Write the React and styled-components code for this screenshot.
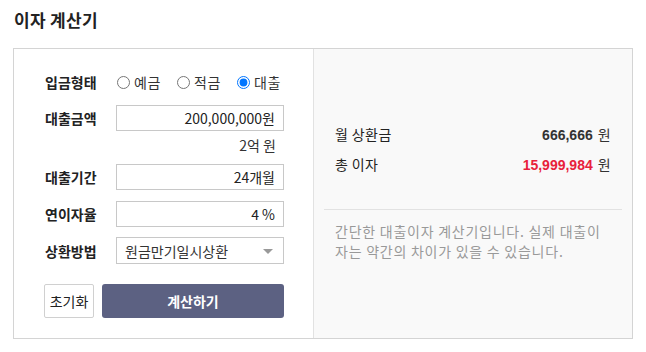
import React, { useState } from "react";
import styled, { createGlobalStyle } from "styled-components";

const GlobalStyle = createGlobalStyle`
  body {
    margin: 0;
    background: #fff;
    font-family: "Noto Sans CJK KR", "Noto Sans", sans-serif;
    color: #222;
  }
`;

const Page = styled.div`
  padding: 8px 13px 0;
`;

const Title = styled.h2`
  margin: 0 0 16px 1px;
  font-size: 17px;
  line-height: 24px;
  font-weight: 700;
  letter-spacing: 0.3px;
  color: #222;
`;

const Box = styled.div`
  display: flex;
  width: 620px;
  height: 291px;
  box-sizing: border-box;
  border: 1px solid #d4d4d4;
`;

const Form = styled.div`
  width: 300px;
  box-sizing: border-box;
  padding: 20px 29px 0 31px;
  border-right: 1px solid #e2e2e2;
`;

const Row = styled.div`
  display: flex;
  align-items: center;
  height: ${(p) => p.$h || 26}px;
  margin-top: ${(p) => p.$mt || 0}px;
`;

const Label = styled.label`
  width: 71px;
  flex: none;
  font-size: 14px;
  font-weight: 700;
  color: #222;
`;

const Radios = styled.div`
  display: flex;
  align-items: center;
`;

const RadioItem = styled.label`
  display: flex;
  align-items: center;
  width: 60px;
  font-size: 14px;
  letter-spacing: 0.5px;
  color: #333;
  cursor: pointer;

  input {
    margin: 0 4px 0 1px;
    width: 13px;
    height: 13px;
  }
`;

const Field = styled.input`
  width: 168px;
  height: 26px;
  box-sizing: border-box;
  border: 1px solid #c8c8c8;
  padding: 0 8px;
  font-family: inherit;
  font-size: 14px;
  color: #222;
  text-align: right;
  outline: none;
`;

const Sub = styled.div`
  margin: 4px 0 0 71px;
  width: 160px;
  text-align: right;
  font-size: 14px;
  line-height: 20px;
  color: #333;
`;

const SelectBox = styled.div`
  position: relative;
  width: 168px;
  height: 27px;
  box-sizing: border-box;
  border: 1px solid #c8c8c8;
  display: flex;
  align-items: center;
  padding-left: 8px;
  font-size: 14px;
  color: #333;
`;

const Caret = styled.span`
  position: absolute;
  right: 10px;
  top: 11px;
  width: 0;
  height: 0;
  border-left: 5px solid transparent;
  border-right: 5px solid transparent;
  border-top: 5px solid #999;
`;

const Buttons = styled.div`
  display: flex;
  gap: 8px;
  margin: 20px 0 0 -1px;
`;

const ResetButton = styled.button`
  width: 50px;
  height: 34px;
  box-sizing: border-box;
  border: 1px solid #d0d0d0;
  border-radius: 2px;
  background: #fff;
  font-family: inherit;
  font-size: 14px;
  color: #222;
  padding: 0;
`;

const CalcButton = styled.button`
  width: 182px;
  height: 34px;
  border: none;
  border-radius: 3px;
  background: #5c6182;
  color: #fff;
  font-family: inherit;
  font-size: 14px;
  font-weight: 700;
`;

const Result = styled.div`
  flex: 1;
  background: #f9f9f9;
  padding: 75px 21px 0 21px;
`;

const ResultRow = styled.div`
  display: flex;
  justify-content: space-between;
  align-items: center;
  height: 20px;
  margin-top: ${(p) => p.$mt || 0}px;
  font-size: 14px;
  letter-spacing: 0.4px;
  color: #222;
`;

const Amount = styled.span`
  font-family: "Liberation Sans", Arial, sans-serif;
  font-weight: 700;
  font-size: 14px;
  letter-spacing: 0;
  color: ${(p) => p.$color || "#333"};
`;

const Unit = styled.span`
  margin-left: 5px;
  font-weight: 400;
  color: #333;
`;

const Divider = styled.hr`
  margin: 35px -11px 0;
  border: none;
  border-top: 1px solid #e2e2e2;
`;

const Note = styled.p`
  margin: 11px 0 0;
  font-size: 14px;
  line-height: 20px;
  letter-spacing: 0.75px;
  color: #999;
`;

const App = () => {
  const [type, setType] = useState("loan");

  return (
    <Page>
      <GlobalStyle />
      <Title>이자 계산기</Title>
      <Box>
        <Form>
          <Row>
            <Label>입금형태</Label>
            <Radios>
              <RadioItem>
                <input
                  type="radio"
                  checked={type === "deposit"}
                  onChange={() => setType("deposit")}
                />
                예금
              </RadioItem>
              <RadioItem>
                <input
                  type="radio"
                  checked={type === "saving"}
                  onChange={() => setType("saving")}
                />
                적금
              </RadioItem>
              <RadioItem>
                <input
                  type="radio"
                  checked={type === "loan"}
                  onChange={() => setType("loan")}
                />
                대출
              </RadioItem>
            </Radios>
          </Row>
          <Row $mt={10}>
            <Label>대출금액</Label>
            <Field defaultValue="200,000,000원" />
          </Row>
          <Sub>2억 원</Sub>
          <Row $mt={9}>
            <Label>대출기간</Label>
            <Field defaultValue="24개월" />
          </Row>
          <Row $mt={11}>
            <Label>연이자율</Label>
            <Field defaultValue="4 %" />
          </Row>
          <Row $mt={10} $h={27}>
            <Label>상환방법</Label>
            <SelectBox>
              원금만기일시상환
              <Caret />
            </SelectBox>
          </Row>
          <Buttons>
            <ResetButton>초기화</ResetButton>
            <CalcButton>계산하기</CalcButton>
          </Buttons>
        </Form>
        <Result>
          <ResultRow>
            <span>월 상환금</span>
            <span>
              <Amount>666,666</Amount>
              <Unit>원</Unit>
            </span>
          </ResultRow>
          <ResultRow $mt={10}>
            <span>총 이자</span>
            <span>
              <Amount $color="#e8213b">15,999,984</Amount>
              <Unit>원</Unit>
            </span>
          </ResultRow>
          <Divider />
          <Note>
            간단한 대출이자 계산기입니다. 실제 대출이
            <br />
            자는 약간의 차이가 있을 수 있습니다.
          </Note>
        </Result>
      </Box>
    </Page>
  );
};

export default App;
